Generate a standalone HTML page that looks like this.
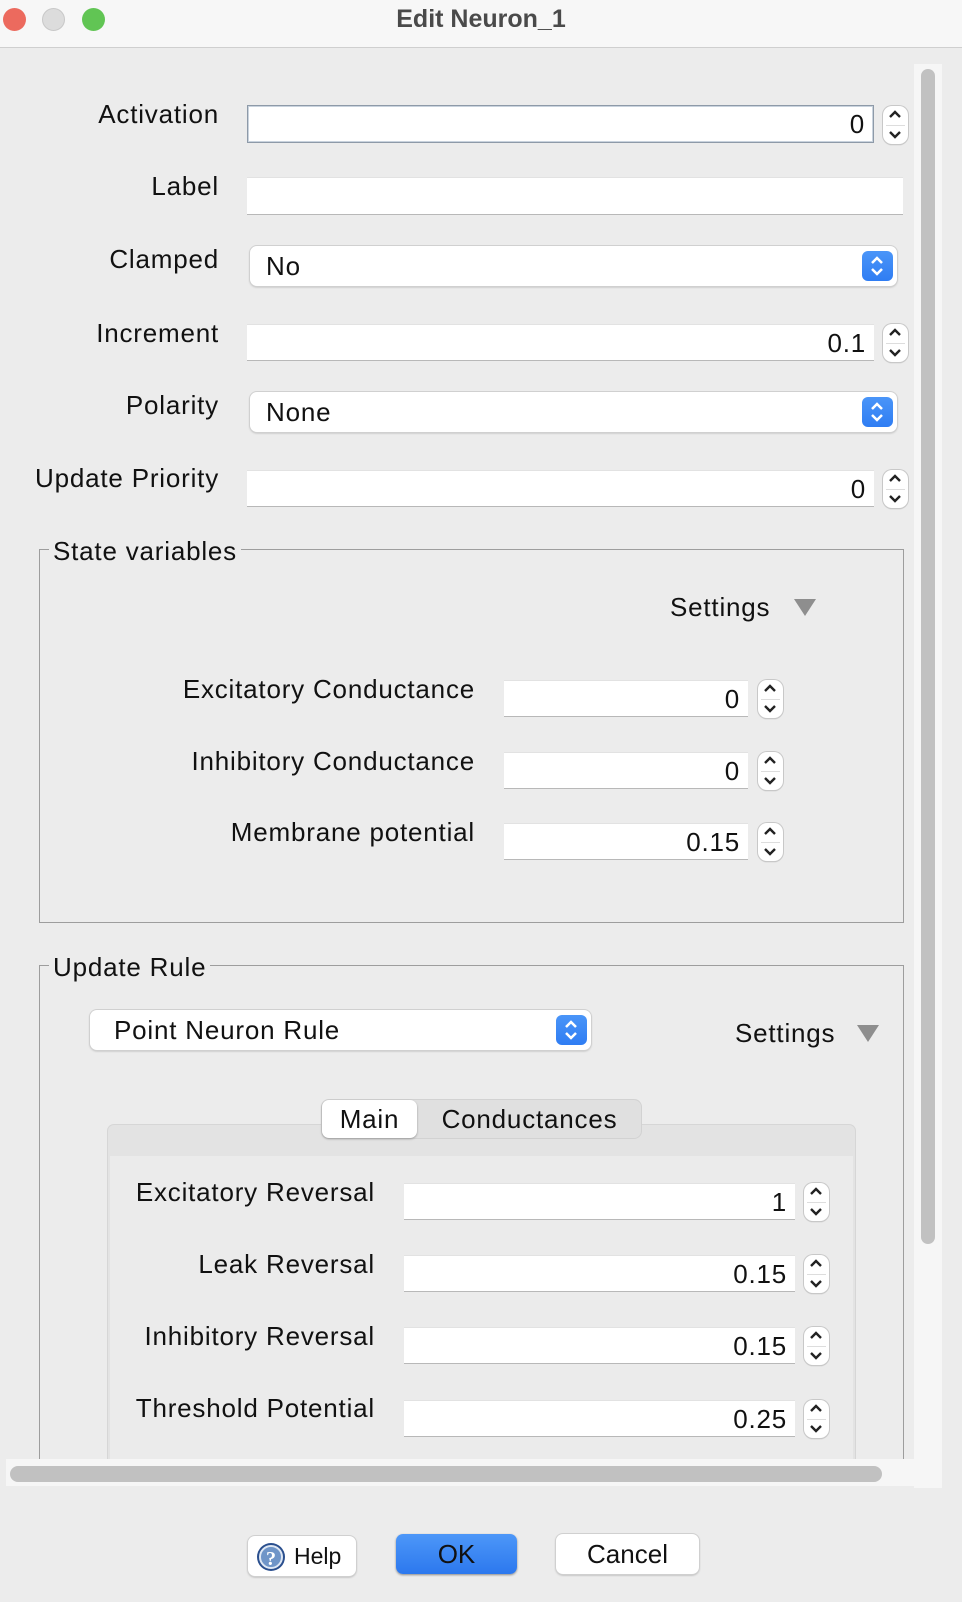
<!DOCTYPE html><html><head><meta charset="utf-8"><style>
*{box-sizing:border-box;margin:0;padding:0}
body{width:962px;height:1602px;background:#ececec;font-family:"Liberation Sans","DejaVu Sans",sans-serif;color:#111;position:relative;overflow:hidden}
.a{position:absolute}
.lbl{position:absolute;font-size:26px;letter-spacing:0.8px;text-align:right;line-height:30px;white-space:nowrap}
.fld{position:absolute;background:#fff;border-bottom:1px solid #b8b8b8;border-top:1px solid #e2e2e2;font-size:26px;letter-spacing:0.8px;text-align:right;padding-right:8px;line-height:36px}
.sp{position:absolute;width:25px;background:#fff;border-radius:9px;box-shadow:0 0 0 1px #c8c8c8,0 1px 1px #aaa}
.sp:before{content:"";position:absolute;left:3px;right:3px;top:50%;border-top:1px solid #ddd}
.sp svg{position:absolute;left:6px}
.cmb{position:absolute;background:#fff;border-radius:7px;box-shadow:0 0 0 1px #d0d0d0,0 1px 2px #aaa;font-size:26px;letter-spacing:0.8px;line-height:40px;padding-left:16px}
.cb{position:absolute;right:4px;top:5px;width:31px;height:30px;background:linear-gradient(#4a95f8,#2f7df3);border-radius:6px}
.box{position:absolute;border:1px solid #9d9d9d}
.tri{position:absolute;width:0;height:0;border-left:11px solid transparent;border-right:11px solid transparent;border-top:17px solid #8e8e8e}
.btn{position:absolute;background:#fff;border-radius:7px;box-shadow:0 0 0 1px #d0d0d0,0 1px 2px #999;font-size:26px;text-align:center;line-height:40px}
</style></head><body>
<div class="a" style="left:0;top:0;width:962px;height:48px;background:#f7f7f7;border-bottom:1px solid #cfcfcf"></div>
<div class="a" style="left:3px;top:8px;width:23px;height:23px;border-radius:50%;background:#ec6a5e"></div>
<div class="a" style="left:42px;top:8px;width:23px;height:23px;border-radius:50%;background:#dcdcdc;border:1px solid #c8c8c8"></div>
<div class="a" style="left:82px;top:8px;width:23px;height:23px;border-radius:50%;background:#61c554"></div>
<div class="a" style="left:0;width:962px;top:4px;text-align:center;font-size:25px;font-weight:bold;color:#4a4a4a;line-height:30px">Edit Neuron_1</div>

<div class="a" style="left:914px;top:64px;width:28px;height:1424px;background:#f6f6f6"></div>
<div class="a" style="left:921px;top:69px;width:14px;height:1175px;border-radius:7px;background:#c1c1c1"></div>
<div class="a" style="left:6px;top:1459px;width:908px;height:27px;background:#f6f6f6"></div>
<div class="a" style="left:10px;top:1466px;width:872px;height:16px;border-radius:8px;background:#c1c1c1"></div>

<div class="lbl" style="right:743px;top:99px">Activation</div>
<div class="fld" style="left:247px;top:105px;width:627px;height:38px;border:1px solid #8e9aa8;box-shadow:inset 0 0 0 1px #c9d3de">0</div>
<div class="sp" style="left:883px;top:106px;height:38px"><svg width="13" height="38"><path d="M1 11l5-5 5 5M1 26l5 5 5-5" stroke="#222" stroke-width="2.4" fill="none"/></svg></div>

<div class="lbl" style="right:743px;top:171px">Label</div>
<div class="fld" style="left:247px;top:177px;width:656px;height:38px"></div>

<div class="lbl" style="right:743px;top:244px">Clamped</div>
<div class="cmb" style="left:250px;top:246px;width:647px;height:40px">No<div class="cb"><svg width="31" height="30"><path d="M10 12l5-5 5 5M10 18l5 5 5-5" stroke="#fff" stroke-width="2.5" fill="none"/></svg></div></div>

<div class="lbl" style="right:743px;top:318px">Increment</div>
<div class="fld" style="left:247px;top:324px;width:627px;height:37px">0.1</div>
<div class="sp" style="left:883px;top:324px;height:38px"><svg width="13" height="38"><path d="M1 11l5-5 5 5M1 26l5 5 5-5" stroke="#222" stroke-width="2.4" fill="none"/></svg></div>

<div class="lbl" style="right:743px;top:390px">Polarity</div>
<div class="cmb" style="left:250px;top:392px;width:647px;height:40px">None<div class="cb"><svg width="31" height="30"><path d="M10 12l5-5 5 5M10 18l5 5 5-5" stroke="#fff" stroke-width="2.5" fill="none"/></svg></div></div>

<div class="lbl" style="right:743px;top:463px">Update Priority</div>
<div class="fld" style="left:247px;top:470px;width:627px;height:37px">0</div>
<div class="sp" style="left:883px;top:470px;height:38px"><svg width="13" height="38"><path d="M1 11l5-5 5 5M1 26l5 5 5-5" stroke="#222" stroke-width="2.4" fill="none"/></svg></div>

<div class="box" style="left:39px;top:549px;width:865px;height:374px"></div>
<div class="lbl" style="left:49px;top:536px;background:#ececec;padding:0 4px;text-align:left">State variables</div>
<div class="lbl" style="left:670px;top:592px;text-align:left">Settings</div>
<div class="tri" style="left:794px;top:599px"></div>

<div class="lbl" style="right:487px;top:674px">Excitatory Conductance</div>
<div class="fld" style="left:504px;top:680px;width:244px;height:37px">0</div>
<div class="sp" style="left:758px;top:680px;height:38px"><svg width="13" height="38"><path d="M1 11l5-5 5 5M1 26l5 5 5-5" stroke="#222" stroke-width="2.4" fill="none"/></svg></div>
<div class="lbl" style="right:487px;top:746px">Inhibitory Conductance</div>
<div class="fld" style="left:504px;top:752px;width:244px;height:37px">0</div>
<div class="sp" style="left:758px;top:752px;height:38px"><svg width="13" height="38"><path d="M1 11l5-5 5 5M1 26l5 5 5-5" stroke="#222" stroke-width="2.4" fill="none"/></svg></div>
<div class="lbl" style="right:487px;top:817px">Membrane potential</div>
<div class="fld" style="left:504px;top:823px;width:244px;height:37px">0.15</div>
<div class="sp" style="left:758px;top:823px;height:38px"><svg width="13" height="38"><path d="M1 11l5-5 5 5M1 26l5 5 5-5" stroke="#222" stroke-width="2.4" fill="none"/></svg></div>

<div class="box" style="left:39px;top:965px;width:865px;height:494px;border-bottom:none"></div>
<div class="lbl" style="left:49px;top:952px;background:#ececec;padding:0 4px;text-align:left">Update Rule</div>
<div class="cmb" style="left:90px;top:1010px;width:501px;height:40px;padding-left:24px">Point Neuron Rule<div class="cb"><svg width="31" height="30"><path d="M10 12l5-5 5 5M10 18l5 5 5-5" stroke="#fff" stroke-width="2.5" fill="none"/></svg></div></div>
<div class="lbl" style="left:735px;top:1018px;text-align:left">Settings</div>
<div class="tri" style="left:857px;top:1025px"></div>

<div class="a" style="left:107px;top:1124px;width:749px;height:335px;background:#e3e3e3;border:1px solid #d6d6d6;border-bottom:none;border-radius:7px 7px 0 0"></div>
<div class="a" style="left:110px;top:1156px;width:743px;height:303px;background:#ebebeb"></div>
<div class="a" style="left:321px;top:1099px;width:321px;height:40px;background:#e0e0e0;border:1px solid #d2d2d2;border-radius:8px"></div>
<div class="a" style="left:322px;top:1100px;width:95px;height:38px;background:#fff;border-radius:7px;box-shadow:0 1px 2px #999;font-size:26px;letter-spacing:0.8px;text-align:center;line-height:38px">Main</div>
<div class="a" style="left:417px;top:1100px;width:225px;height:38px;font-size:26px;letter-spacing:0.8px;text-align:center;line-height:38px">Conductances</div>

<div class="lbl" style="right:587px;top:1177px">Excitatory Reversal</div>
<div class="fld" style="left:404px;top:1183px;width:391px;height:37px">1</div>
<div class="sp" style="left:804px;top:1183px;height:38px"><svg width="13" height="38"><path d="M1 11l5-5 5 5M1 26l5 5 5-5" stroke="#222" stroke-width="2.4" fill="none"/></svg></div>
<div class="lbl" style="right:587px;top:1249px">Leak Reversal</div>
<div class="fld" style="left:404px;top:1255px;width:391px;height:37px">0.15</div>
<div class="sp" style="left:804px;top:1255px;height:38px"><svg width="13" height="38"><path d="M1 11l5-5 5 5M1 26l5 5 5-5" stroke="#222" stroke-width="2.4" fill="none"/></svg></div>
<div class="lbl" style="right:587px;top:1321px">Inhibitory Reversal</div>
<div class="fld" style="left:404px;top:1327px;width:391px;height:37px">0.15</div>
<div class="sp" style="left:804px;top:1327px;height:38px"><svg width="13" height="38"><path d="M1 11l5-5 5 5M1 26l5 5 5-5" stroke="#222" stroke-width="2.4" fill="none"/></svg></div>
<div class="lbl" style="right:587px;top:1393px">Threshold Potential</div>
<div class="fld" style="left:404px;top:1400px;width:391px;height:37px">0.25</div>
<div class="sp" style="left:804px;top:1400px;height:38px"><svg width="13" height="38"><path d="M1 11l5-5 5 5M1 26l5 5 5-5" stroke="#222" stroke-width="2.4" fill="none"/></svg></div>

<div class="btn" style="left:248px;top:1536px;width:108px;height:40px;text-align:left;padding-left:46px;font-size:23px">Help
<svg class="a" style="left:8px;top:6px" width="30" height="30"><circle cx="15" cy="15" r="14" fill="#2a4f8e"/><circle cx="15" cy="15" r="11" fill="#6f95c8" stroke="#dfe8f4" stroke-width="2"/><text x="15" y="23" font-size="20" font-weight="bold" fill="#fff" text-anchor="middle" font-family="Liberation Serif">?</text></svg></div>
<div class="btn" style="left:396px;top:1534px;width:121px;height:40px;background:linear-gradient(#4d97f8,#2c78ee);box-shadow:0 1px 2px #888;color:#111">OK</div>
<div class="btn" style="left:556px;top:1534px;width:143px;height:40px">Cancel</div>
</body></html>
